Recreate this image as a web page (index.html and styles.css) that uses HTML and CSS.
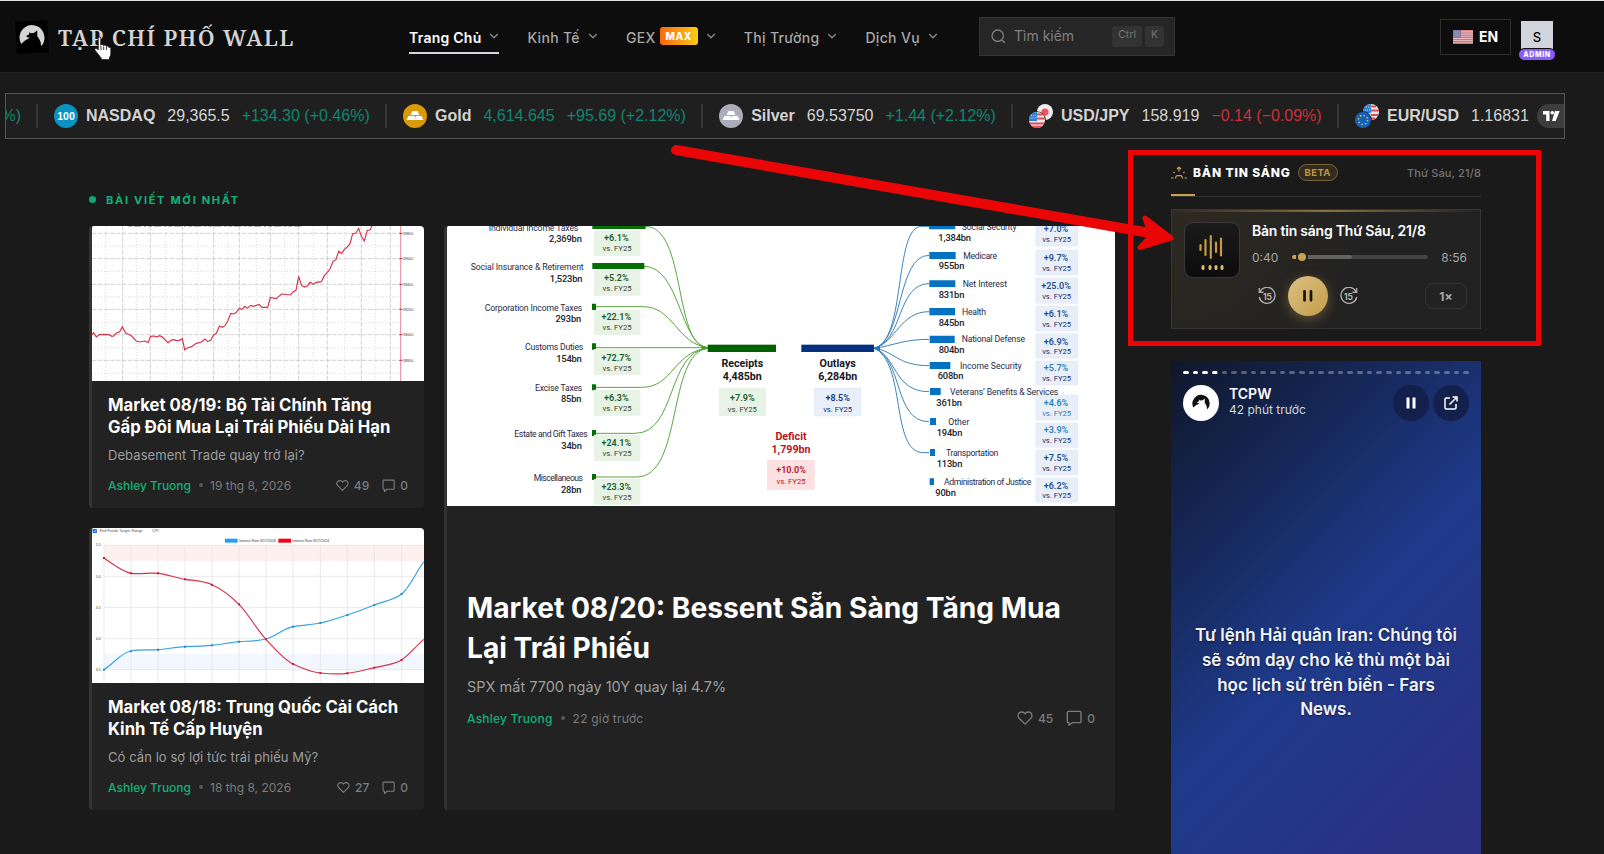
FILE: index.html
```html
<!DOCTYPE html>
<html lang="vi">

<head>
    <meta charset="UTF-8">
    <meta name="viewport" content="width=device-width, initial-scale=1.0">
    <title>Tạp Chí Phố Wall</title>
    <link rel="stylesheet" href="styles.css">
</head>

<body>
    <svg class="defs" width="0" height="0">
        <symbol id="chevron" viewBox="0 0 10 6"><path d="M1.2 1l3.8 3.8L8.8 1" fill="none" stroke="currentColor" stroke-width="1.3"/></symbol>
        <symbol id="heart" viewBox="0 0 24 24"><path d="M20.8 4.6a5.5 5.5 0 0 0-7.8 0L12 5.7l-1-1.1a5.5 5.5 0 0 0-7.8 7.8L12 21.2l8.800-8.800a5.500 5.500 0 0 0 0-7.800z" fill="none" stroke="currentColor" stroke-width="2" stroke-linejoin="round"/></symbol>
        <symbol id="comment" viewBox="0 0 24 24"><path d="M4 2h17a1.500 1.500 0 0 1 1.500 1.500v14A1.500 1.500 0 0 1 21 19H9.500L4.500 23v-4H3.500A1.500 1.500 0 0 1 2 17.500v-14A1.500 1.500 0 0 1 3.500 2z" fill="none" stroke="currentColor" stroke-width="2" stroke-linejoin="round"/></symbol>
        <symbol id="wolf" viewBox="0 0 26 26"><path d="M2 19.500A12.500 12.500 0 1 1 21.500 22.800C22 18.500 20.500 15.500 18.300 12.500L18.600 6.500 15.500 9l-3.500.3L10.500 8l-.3 2.300-2.700 1.200.5 1.500 3 .7C8 15 4.500 16.500 2 19.500z" fill="currentColor"/></symbol>
        <symbol id="bars" viewBox="0 0 24 24"><path d="M9.500 7h5l2 4h-9zM5.500 12h6l1.500 4H3.500zM13 12h5.500l2 4h-9z" fill="#fff"/></symbol>
    </svg>

    <header class="header">
        <a class="logo">
            <span class="logo-mark"><svg width="26" height="26"><use href="#wolf"/></svg></span>
            <span class="logo-text">TẠP CHÍ PHỐ WALL</span>
        </a>
        <nav class="nav">
            <a class="active">Trang Chủ <svg class="chev"><use href="#chevron"/></svg></a>
            <a>Kinh Tế <svg class="chev"><use href="#chevron"/></svg></a>
            <a class="gex">GEX <b class="max">MAX</b><svg class="chev"><use href="#chevron"/></svg></a>
            <a>Thị Trường <svg class="chev"><use href="#chevron"/></svg></a>
            <a>Dịch Vụ <svg class="chev"><use href="#chevron"/></svg></a>
        </nav>
        <div class="search">
            <svg width="15" height="15" viewBox="0 0 15 15"><path d="M10.800 10.800L14 14M6.700 12.400a5.700 5.700 0 1 0 0-11.400 5.700 5.700 0 0 0 0 11.400z" fill="none" stroke="currentColor" stroke-width="1.300"/></svg>
            <span class="search-label">Tìm kiếm</span>
            <kbd>Ctrl</kbd><kbd>K</kbd>
        </div>
        <div class="lang">
            <svg width="20" height="14" viewBox="0 0 20 14"><rect width="20" height="14" rx="1" fill="#e9b9be"/><path d="M0 .7h20M0 3h20M0 5.200h20M0 7.400h20M0 9.500h20M0 11.600h20M0 13.500h20" stroke="#d8717d" stroke-width="1.100"/><rect width="8" height="8" fill="#7c79a8"/><path d="M1.500 2h5M1.500 4h5M1.500 6h5" stroke="#c9c8de" stroke-width=".8" stroke-dasharray="1 1"/></svg>
            EN
        </div>
        <div class="avatar">S<span class="admin">ADMIN</span></div>
        <svg class="cursor" width="18" height="25" viewBox="0 0 18 25"><path d="M4.200 2.200c0-1.600 2.600-1.600 2.600 0v7c.6-1.200 2.600-1 2.800.4.800-1 2.600-.6 2.700.8 1-.8 2.500-.2 2.600 1.200.8-.6 2 0 2 1.200v4.500c0 2-.8 3-1.400 4.400v2H7.200v-1.500C6 20.500 3.500 17.500 1 14.200c-.9-1.300.6-2.700 1.900-1.600l1.300 1.200z" fill="#fff" stroke="#111" stroke-width=".9"/><path d="M7 10v4M9.700 10.500V14M12.400 11v3" stroke="#222" stroke-width=".9"/></svg>
    </header>

    <div class="ticker">
        <div class="quote first"><span class="up">%)</span></div>
        <div class="quote">
            <svg class="sym" viewBox="0 0 24 24"><circle cx="12" cy="12" r="12" fill="#0a93c0"/><text x="12" y="15.500" class="hundred">100</text></svg>
            <b>NASDAQ</b><span>29,365.5</span><span class="up">+134.30 (+0.46%)</span>
        </div>
        <div class="quote">
            <svg class="sym" viewBox="0 0 24 24"><circle cx="12" cy="12" r="12" fill="#d99a08"/><use href="#bars"/></svg>
            <b>Gold</b><span class="up">4,614.645</span><span class="up">+95.69 (+2.12%)</span>
        </div>
        <div class="quote">
            <svg class="sym" viewBox="0 0 24 24"><circle cx="12" cy="12" r="12" fill="#adacba"/><use href="#bars"/></svg>
            <b>Silver</b><span>69.53750</span><span class="up">+1.44 (+2.12%)</span>
        </div>
        <div class="quote">
            <svg class="sym" viewBox="0 0 24 24">
                <circle cx="16" cy="8" r="8" fill="#f0edf0"/><circle cx="16" cy="8" r="3.600" fill="#ef5360"/>
                <circle cx="8" cy="16" r="8.800" fill="#202020"/><circle cx="8" cy="16" r="8" fill="#e9e9ee"/>
                <path d="M8 10.500h5.500M8 14.500h8M1 19.500h14" stroke="#e34b50" stroke-width="2.200"/><path d="M2.500 21.800h11a8 8 0 0 1-11 0z" fill="#e34b50"/><path d="M8 8v9H0a8 8 0 0 1 8-9z" fill="#2f7fd6"/><path d="M2 11.500h6M1.500 14h6.500" stroke="#b4d3f4" stroke-dasharray="1 1"/>
            </svg>
            <b>USD/JPY</b><span>158.919</span><span class="down">−0.14 (−0.09%)</span>
        </div>
        <div class="quote last">
            <svg class="sym" viewBox="0 0 24 24">
                <circle cx="16" cy="8" r="8" fill="#e9e9ee"/><path d="M16 2.500h5M16 6.500h8M16 11h7M13 14.500h7" stroke="#e34b50" stroke-width="2"/><path d="M16 0v9H8a8 8 0 0 1 8-9z" fill="#2f7fd6"/><path d="M11 3h5M10 6h6" stroke="#b4d3f4" stroke-dasharray="1 1"/>
                <circle cx="8" cy="16" r="8.800" fill="#202020"/><circle cx="8" cy="16" r="8" fill="#1660bd"/><circle cx="8" cy="16" r="4.600" fill="none" stroke="#e0cb45" stroke-width="1.500" stroke-dasharray="1.400 2.210"/>
            </svg>
            <b>EUR/USD</b><span>1.16831</span>
        </div>
        <div class="tv"><svg width="17" height="10" viewBox="0 0 17 10"><path d="M0 0h6.500v10H3.200V3.500H0zM12 0h4.700l-4 10H9z" fill="#fff"/><circle cx="9.300" cy="1.800" r="1.800" fill="#fff"/></svg></div>
    </div>

    <main class="page">
        <section class="news">
            <h2 class="section-title">BÀI VIẾT MỚI NHẤT</h2>
            <div class="news-grid">
                <div class="small-cards">
                    <article class="card">
                        <svg class="thumb" viewBox="36 138 996 465" preserveAspectRatio="none">
                            <rect x="36" y="138" width="996" height="465" fill="#fff"/>
                            <path class="grid-dash" d="M36 160H962M36 236H962M36 313H962M36 388H962M36 464H962M36 541H962M128 138V603M211 138V603M307 138V603M401 138V603M478 138V603M571 138V603M656 138V603M742 138V603M844 138V603M931 138V603"/>
                            <path class="grid-dot" d="M36 198H962M36 274H962M36 350H962M36 427H962M36 503H962M36 580H962M77 138V603M169 138V603M257 138V603M354 138V603M444 138V603M529 138V603M614 138V603M700 138V603M793 138V603M887 138V603"/>
                            <path d="M145 139H663" stroke="#aaa" stroke-width="3" stroke-dasharray="12 5 22 8 7 6"/>
                            <path d="M962 138V603" stroke="#e58a95" stroke-width="3"/>
                            <path d="M958 160h10M958 236h10M958 313h10M958 388h10M958 464h10M958 541h10" stroke="#c22f45" stroke-width="3"/>
                            <polyline class="line-red" points="36,464 41,458 49,471 58,464 72,463 86,464 96,469 101,468 109,459 119,455 127,440 137,459 145,463 154,467 163,477 170,484 178,486 196,483 204,488 212,469 222,468 229,471 239,467 247,471 264,488 273,481 281,479 290,482 298,481 307,476 314,509 323,503 335,500 349,490 364,486 375,477 383,485 392,481 401,464 409,460 418,438 427,442 435,437 443,424 452,400 461,402 469,397 478,385 486,388 494,379 502,385 512,376 520,379 538,373 546,382 563,382 571,352 588,356 605,342 631,345 640,335 648,331 656,289 665,317 674,321 683,317 690,307 700,313 708,307 724,305 733,287 742,277 750,267 759,244 768,239 776,214 785,221 793,208 801,202 810,191 818,161 828,159 836,145 844,169 853,183 862,151 870,150 876,138"/>
                            <g class="axis"><text x="969" y="165">39800</text><text x="969" y="241">39600</text><text x="969" y="318">39400</text><text x="969" y="393">39200</text><text x="969" y="469">39000</text><text x="969" y="546">38800</text></g>
                        </svg>
                        <div class="card-body">
                            <h3>Market 08/19: Bộ Tài Chính Tăng<br>Gấp Đôi Mua Lại Trái Phiếu Dài Hạn</h3>
                            <p>Debasement Trade quay trở lại?</p>
                            <div class="meta">
                                <span class="author">Ashley Truong</span><i></i><span>19 thg 8, 2026</span>
                                <span class="stat first-stat"><svg><use href="#heart"/></svg>49</span>
                                <span class="stat"><svg><use href="#comment"/></svg>0</span>
                            </div>
                        </div>
                    </article>
                    <article class="card">
                        <svg class="thumb" viewBox="36 39 996 465" preserveAspectRatio="none">
                            <rect x="36" y="39" width="996" height="465" fill="#fff"/>
                            <rect x="72" y="91" width="960" height="47" fill="#fff0f0"/>
                            <rect x="72" y="417" width="960" height="48" fill="#f1f7fd"/>
                            <path d="M72 91H1032M72 184H1032M72 277H1032M72 371H1032M72 464H1032M72 91V504M153 91V504M234 91V504M315 91V504M396 91V504M477 91V504M558 91V504M639 91V504M721 91V504M802 91V504M883 91V504M965 91V504" stroke="#e4e4e4" stroke-width="2.500"/>
                            <rect x="38" y="42" width="13" height="12" rx="2" fill="#1668e3"/><path d="M41 48l3 3 5-6" fill="none" stroke="#fff" stroke-width="2"/>
                            <rect x="435" y="71" width="38" height="12" fill="#229ff0"/><rect x="595" y="71" width="38" height="12" fill="#f4001c"/>
                            <g class="axis"><text x="59" y="52" textLength="129">Fed Funds Target Range</text><text x="217" y="52">CPI</text><text x="477" y="80" textLength="111">Interest Rate 8/17/2026</text><text x="636" y="80" textLength="111">Interest Rate 8/17/2024</text><text x="47" y="94">5.5</text><text x="47" y="188">5.0</text><text x="47" y="281">4.5</text><text x="47" y="374">4.0</text><text x="47" y="467">3.5</text></g>
                            <path class="line-blue" d="M72 464C105 442 125 412 153 408 180 403 207 406 234 404S288 396 315 395 369 393 396 391 450 382 477 380 531 379 558 372 612 340 639 335 693 330 721 324 775 309 802 300 856 281 883 270 940 256 965 237C991 215 1012 164 1032 140"/>
                            <path class="line-red" d="M72 129C100 148 126 169 153 175 180 178 207 173 234 175S288 189 315 193 369 197 396 209 450 241 477 268 531 344 558 373 612 434 639 447 693 471 721 474 775 478 802 475 856 464 883 458 942 449 965 435C990 416 1011 390 1032 373"/>
                            <path class="dots-blue" d="M72 464h0M153 409h0M234 404h0M315 395h0M396 391h0M477 380h0M639 335h0M721 324h0M802 300h0M883 270h0M965 237h0"/>
                            <path class="dots-red" d="M72 129h0M153 175h0M234 175h0M315 193h0M396 209h0M477 268h0M558 373h0M639 447h0M721 474h0M802 475h0M883 458h0M965 435h0"/>
                        </svg>
                        <div class="card-body">
                            <h3>Market 08/18: Trung Quốc Cải Cách<br>Kinh Tế Cấp Huyện</h3>
                            <p>Có cần lo sợ lợi tức trái phiếu Mỹ?</p>
                            <div class="meta">
                                <span class="author">Ashley Truong</span><i></i><span>18 thg 8, 2026</span>
                                <span class="stat first-stat"><svg><use href="#heart"/></svg>27</span>
                                <span class="stat"><svg><use href="#comment"/></svg>0</span>
                            </div>
                        </div>
                    </article>
                </div>

                <article class="card featured">
                    <svg class="hero" viewBox="21 33 2004 840" preserveAspectRatio="none">
                        <rect x="21" y="33" width="2004" height="840" fill="#fff"/>
                        <!-- receipts -->
                        <g class="flow-green">
                            <path d="M616 34C740 34 700 395 803 398"/><path d="M612 154C720 154 720 390 803 398"/><path d="M467 275H610C700 275 710 385 803 398"/><path d="M467 398H803"/><path d="M467 517H605C700 517 700 410 803 400"/><path d="M467 655H585C710 655 680 410 803 400"/><path d="M467 786H590C730 786 680 415 803 400"/>
                        </g>
                        <path d="M785 390l18 8-18 8z" fill="#47a51d"/>
                        <path d="M457 33h160v9H457zM457 144h156v18H457zM456 266h12v19h-12zM456 385h12v19h-12zM456 508h12v18h-12zM456 645h12v18h-12zM456 777h12v18h-12z" fill="#047004"/>
                        <rect x="803" y="389" width="205" height="22" fill="#006100"/>
                        <path d="M462 48h139v75H462zM462 164h139v78H462zM462 285h139v75H462zM462 402h139v78H462zM462 524h139v78H462zM462 659h139v79H462zM462 792h139v77H462zM837 519h141v84H837z" fill="#e7f3e5"/>
                        <g class="name">
                            <text x="146" y="47" textLength="269">Individual Income Taxes</text><text x="92" y="165" textLength="339">Social Insurance &amp; Retirement</text><text x="134" y="287" textLength="293">Corporation Income Taxes</text><text x="255" y="404" textLength="175">Customs Duties</text><text x="285" y="527" textLength="142">Excise Taxes</text><text x="223" y="666" textLength="220">Estate and Gift Taxes</text><text x="281" y="797" textLength="148">Miscellaneous</text>
                        </g>
                        <g class="amount end"><text x="425" y="81">2,369bn</text><text x="427" y="200">1,523bn</text><text x="423" y="321">293bn</text><text x="425" y="440">154bn</text><text x="424" y="561">85bn</text><text x="425" y="702">34bn</text><text x="424" y="833">28bn</text></g>
                        <g class="pct green"><text x="529" y="79">+6.1%</text><text x="529" y="199">+5.2%</text><text x="529" y="316">+22.1%</text><text x="529" y="439">+72.7%</text><text x="529" y="559">+6.3%</text><text x="529" y="694">+24.1%</text><text x="529" y="826">+23.3%</text><text x="907" y="559">+7.9%</text></g>
                        <g class="vs"><text x="531" y="108">vs. FY25</text><text x="531" y="228">vs. FY25</text><text x="531" y="346">vs. FY25</text><text x="531" y="468">vs. FY25</text><text x="531" y="588">vs. FY25</text><text x="531" y="723">vs. FY25</text><text x="531" y="856">vs. FY25</text><text x="907" y="590">vs. FY25</text></g>
                        <g class="total"><text x="907" y="455">Receipts</text><text x="907" y="495">4,485bn</text><text x="1193" y="455">Outlays</text><text x="1193" y="495">6,284bn</text></g>
                        <!-- deficit -->
                        <rect x="981" y="735" width="143" height="90" fill="#fde0e2"/>
                        <g class="total red"><text x="1053" y="676">Deficit</text><text x="1053" y="715">1,799bn</text></g>
                        <text class="pct red" x="1053" y="775">+10.0%</text><text class="vs red" x="1053" y="808">vs. FY25</text>
                        <!-- outlays -->
                        <g transform="translate(1020 0)">
                            <g class="flow-blue">
                                <path d="M282 400C380 380 340 34 425 34H447"/><path d="M282 400C370 380 350 121 447 121"/><path d="M282 400C370 380 350 206 447 206"/><path d="M282 400C350 380 360 290 447 290"/><path d="M282 400C340 392 370 373 447 373"/><path d="M282 400C340 405 350 452 447 452"/><path d="M282 400C350 420 340 530 447 530"/><path d="M282 400C370 430 340 620 447 620"/><path d="M282 400C380 440 330 713 430 713H447"/>
                            </g>
                            <path d="M282 400l18-9v18z" fill="#167cc9"/>
                            <rect x="64" y="389" width="218" height="22" fill="#05307f"/>
                            <path d="M447 33h79v10h-79zM448 111h79v21h-79zM448 196h78v20h-78zM448 279h77v22h-77zM449 362h75v22h-75zM449 441h62v21h-62zM450 519h32v21h-32zM450 609h18v21h-18zM450 702h15v21h-15zM449 790h13v20h-13z" fill="#0472c2"/>
                            <path d="M767 30h127v64H767zM767 105h127v75H767zM767 189h127v76H767zM767 273h127v75H767zM767 356h127v74H767zM767 438h127v72H767zM767 539h127v76H767zM767 624h127v73H767zM767 705h127v75H767zM767 789h127v73H767zM103 519h140v84H103z" fill="#e9eff8" stroke="#dbe5f2"/>
                            <g class="name">
                                <text x="545" y="44" textLength="165">Social Security</text><text x="550" y="131" textLength="101">Medicare</text><text x="548" y="215" textLength="133">Net Interest</text><text x="546" y="300" textLength="72">Health</text><text x="545" y="381" textLength="190">National Defense</text><text x="540" y="462" textLength="185">Income Security</text><text x="510" y="539" textLength="325">Veterans’ Benefits &amp; Services</text><text x="505" y="630" textLength="63">Other</text><text x="498" y="722" textLength="157">Transportation</text><text x="492" y="811" textLength="262">Administration of Justice</text>
                            </g>
                            <g class="amount"><text x="475" y="77">1,384bn</text><text x="476" y="163">955bn</text><text x="476" y="248">831bn</text><text x="476" y="332">845bn</text><text x="476" y="413">804bn</text><text x="473" y="493">608bn</text><text x="469" y="572">361bn</text><text x="470" y="663">194bn</text><text x="470" y="755">113bn</text><text x="466" y="843">90bn</text></g>
                            <g class="pct blue"><text x="828" y="52">+7.0%</text><text x="828" y="138">+9.7%</text><text x="828" y="223">+25.0%</text><text x="828" y="307">+6.1%</text><text x="828" y="389">+6.9%</text><text class="sky" x="828" y="469">+5.7%</text><text class="sky" x="828" y="574">+4.6%</text><text class="sky" x="828" y="655">+3.9%</text><text x="828" y="738">+7.5%</text><text x="828" y="821">+6.2%</text><text class="navy" x="173" y="559">+8.5%</text></g>
                            <g class="vs navy"><text x="830" y="81">vs. FY25</text><text x="830" y="167">vs. FY25</text><text x="830" y="252">vs. FY25</text><text x="830" y="336">vs. FY25</text><text x="830" y="418">vs. FY25</text><text x="830" y="498">vs. FY25</text><text class="sky" x="830" y="603">vs. FY25</text><text x="830" y="685">vs. FY25</text><text x="830" y="768">vs. FY25</text><text x="830" y="850">vs. FY25</text><text x="173" y="590">vs. FY25</text></g>
                        </g>
                    </svg>
                    <div class="card-body">
                        <h3>Market 08/20: Bessent Sẵn Sàng Tăng Mua<br>Lại Trái Phiếu</h3>
                        <p>SPX mất 7700 ngày 10Y quay lại 4.7%</p>
                        <div class="meta">
                            <span class="author">Ashley Truong</span><i></i><span>22 giờ trước</span>
                            <span class="stat first-stat"><svg><use href="#heart"/></svg>45</span>
                            <span class="stat"><svg><use href="#comment"/></svg>0</span>
                        </div>
                    </div>
                </article>
            </div>
        </section>

        <aside class="sidebar">
            <div class="brief-head">
                <svg width="16" height="14" viewBox="0 0 16 14"><path d="M0 12h2.500M13.500 12H16M2.500 6l1.200 1.200M13.500 6l-1.200 1.200M8 1.200v4.300M6 3l2-2 2 2M4.500 12.500c0-1.200.5-2.200 1.500-2.900l4 0c1 .7 1.500 1.700 1.500 2.900" fill="none" stroke="#c9a24e" stroke-width="1.200"/></svg>
                <span class="brief-title">BẢN TIN SÁNG</span>
                <span class="beta">BETA</span>
                <span class="brief-date">Thứ Sáu, 21/8</span>
            </div>
            <div class="player">
                <div class="cover">
                    <svg width="54" height="54" viewBox="0 0 54 54"><path d="M15.500 22v5M20.500 17v15M25.800 13v22M31 19.500v9.500M36 15.500v17" stroke="#c39b4a" stroke-width="2.200" stroke-linecap="round"/><path d="M18 43.500v2M25 43.500v2M31 43.500v2M37 43.500v2" stroke="#e0bd74" stroke-width="3" stroke-linecap="round"/></svg>
                </div>
                <div class="player-main">
                    <div class="player-title">Bản tin sáng Thứ Sáu, 21/8</div>
                    <div class="progress">
                        <span>0:40</span>
                        <div class="track"><div class="buffered"></div><div class="knob"></div></div>
                        <span>8:56</span>
                    </div>
                    <div class="controls">
                        <svg width="18" height="18" viewBox="0 0 18 18"><path d="M2 4.500A8 8 0 1 1 1.200 10M1.300 1v4.200h4.200" fill="none" stroke="#aaa" stroke-width="1.400"/><text x="9.500" y="12.800" class="skip">15</text></svg>
                        <button class="play"><svg width="10" height="12" viewBox="0 0 10 12"><path d="M1.500 1.300v9M8 1.300v9" stroke="#1a1407" stroke-width="2.700" stroke-linecap="round"/></svg></button>
                        <svg width="18" height="18" viewBox="0 0 18 18"><path d="M16 4.500A8 8 0 1 0 16.800 10M16.700 1v4.200h-4.200" fill="none" stroke="#aaa" stroke-width="1.400"/><text x="8.500" y="12.800" class="skip">15</text></svg>
                        <button class="speed">1×</button>
                    </div>
                </div>
            </div>

            <div class="story">
                <div class="segments">
                    <i class="on"></i><i class="on"></i><i class="on"></i><i class="part"></i><i></i><i></i><i></i><i></i><i></i><i></i>
                    <i></i><i></i><i></i><i></i><i></i><i></i><i></i><i></i><i></i><i></i>
                    <i></i><i></i><i></i><i></i><i></i><i></i><i></i><i></i><i></i><i></i>
                </div>
                <div class="story-head">
                    <span class="story-avatar"><svg width="18" height="18"><use href="#wolf"/></svg></span>
                    <div class="story-name"><b>TCPW</b><span>42 phút trước</span></div>
                    <button><svg width="10" height="12" viewBox="0 0 10 12"><path d="M2 .5v11M8 .5v11" stroke="#fff" stroke-width="3"/></svg></button>
                    <button><svg width="14" height="14" viewBox="0 0 14 14"><path d="M6 2H2.200Q1 2 1 3.200v8.600Q1 13 2.200 13h8.600q1.200 0 1.200-1.200V8M8.500 1H13v4.500M13 1L5.500 8.500" fill="none" stroke="#fff" stroke-width="1.500"/></svg></button>
                </div>
                <p class="story-text">Tư lệnh Hải quân Iran: Chúng tôi<br>sẽ sớm dạy cho kẻ thù một bài<br>học lịch sử trên biển - Fars<br>News.</p>
            </div>
        </aside>
    </main>

    <svg class="annotation" width="1604" height="854" viewBox="0 0 1604 854">
        <rect x="1130.500" y="152.500" width="408" height="191" fill="none" stroke="#ea0606" stroke-width="5"/>
        <path d="M676 150L1150 233" stroke="#ea0606" stroke-width="10" stroke-linecap="round"/>
        <path d="M1145 218L1171 238 1140 247.500 1151 236z" fill="#ea0606" stroke="#ea0606" stroke-width="5" stroke-linejoin="round"/>
    </svg>
</body>

</html>
```

FILE: styles.css
```css
* {
    box-sizing: border-box;
}

body {
    margin: 0;
    height: 854px;
    overflow: hidden;
    position: relative;
    background-color: #1a1a1a;
    color: #fff;
    font-family: Inter, "Liberation Sans", sans-serif;
}

button {
    border: none;
    padding: 0;
    font-family: inherit;
    color: inherit;
}

svg {
    display: block;
    flex: none;
}

.defs {
    position: absolute;
}

/* header */
.header {
    position: relative;
    display: flex;
    align-items: center;
    height: 73px;
    padding: 0 51px 0 16px;
    background-color: #0d0d0d;
    border-top: 1px solid #dfe3e1;
    border-bottom: 1px solid #202020;
}

.logo {
    display: flex;
    align-items: center;
    gap: 10px;
    width: 393px;
}

.logo-mark {
    display: flex;
    align-items: center;
    justify-content: center;
    width: 32px;
    height: 32px;
    background-color: #000;
    color: #d4d4d4;
    transform: rotate(-3deg);
}

.logo-text {
    font-family: "Noto Serif", "Liberation Serif", serif;
    font-size: 22px;
    font-weight: 600;
    line-height: 32px;
    letter-spacing: 1.35px;
    color: #d4d4d4;
    white-space: nowrap;
}

.nav {
    display: flex;
    align-items: center;
    gap: 28px;
    width: 570px;
    font-size: 14px;
    font-weight: 500;
    color: #a8a8a8;
    white-space: nowrap;
}

.nav a {
    display: flex;
    align-items: center;
    gap: 8px;
    height: 34px;
    padding-top: 3px;
    border-bottom: 2px solid transparent;
    letter-spacing: 0.32px;
}

.nav .active {
    color: #fff;
    font-weight: 600;
    letter-spacing: 0.25px;
    border-color: #d5d7e0;
}

.chev {
    width: 10px;
    height: 6px;
    margin-top: -2px;
    color: #8a8a8a;
}

.nav .gex {
    gap: 4px;
}

.max {
    padding: 0 6px;
    margin: -3px 4px 0 0;
    border-radius: 3px;
    background: linear-gradient(90deg, #f9690e, #fccb15);
    color: #fff;
    font-size: 10px;
    font-weight: 800;
    line-height: 18px;
    letter-spacing: 0.5px;
}

.search {
    display: flex;
    align-items: center;
    gap: 3px;
    width: 196px;
    height: 39px;
    padding: 0 10px 0 11px;
    background-color: #262626;
    border: 1px solid #333;
    color: #808080;
    font-size: 14px;
}

.search-label {
    flex: 1;
    margin: -2px 0 0 5px;
}

kbd {
    height: 21px;
    padding: 0 6px;
    border-radius: 3px;
    background-color: #333;
    color: #747474;
    font: 10.5px/18px Inter, sans-serif;
}

.lang {
    display: flex;
    align-items: center;
    gap: 6px;
    width: 71px;
    height: 36px;
    margin-left: auto;
    padding-left: 12px;
    border: 1px solid #2e2e2e;
    font-size: 14px;
    font-weight: 700;
}

.avatar {
    position: relative;
    width: 32px;
    height: 32px;
    margin-left: 10px;
    background-color: #d1d5db;
    color: #000;
    font-size: 13px;
    font-weight: 500;
    line-height: 33px;
    text-align: center;
}

.admin {
    position: absolute;
    left: -2px;
    top: 28px;
    width: 36px;
    border-radius: 6px;
    background-color: #8b5cf6;
    box-shadow: 0 0 0 1px #0d0d0d;
    color: #fff;
    font-size: 7px;
    font-weight: 800;
    line-height: 11px;
    letter-spacing: 0.6px;
}

.cursor {
    position: absolute;
    left: 94px;
    top: 35px;
}

/* ticker */
.ticker {
    display: flex;
    align-items: center;
    width: 1560px;
    height: 46px;
    margin: 20px 0 0 5px;
    background-color: #1f1f1f;
    border: 1px solid #565656;
    font-family: "Liberation Sans", Arial, sans-serif;
    font-size: 16px;
    color: #d3d3d3;
    white-space: nowrap;
    overflow: hidden;
}

.quote {
    display: flex;
    align-items: center;
    flex: none;
    gap: 12px;
    height: 24px;
    padding: 0 15.300px 0 16px;
    border-right: 2px solid #363636;
}

.quote.first {
    justify-content: flex-end;
    width: 32px;
    padding: 0 15px 0 0;
}

.quote.last {
    border: none;
    padding-right: 8px;
}

.sym {
    width: 24px;
    height: 24px;
    margin-right: -4px;
}

.hundred {
    fill: #fff;
    font: bold 10.5px "Liberation Sans", sans-serif;
    text-anchor: middle;
}

.up {
    color: #118670;
}

.down {
    color: #cb303c;
}

.tv {
    display: flex;
    align-items: center;
    flex: none;
    width: 34px;
    height: 24px;
    padding-left: 6px;
    border-radius: 12px 0 0 12px;
    background-color: #3d3d3d;
}

/* page */
.page {
    display: flex;
    gap: 56px;
    padding: 0 0 0 89px;
}

.news {
    width: 1026px;
    padding-top: 52px;
}

.section-title {
    display: flex;
    align-items: center;
    gap: 10px;
    height: 17px;
    margin: 0 0 18px;
    color: #16b079;
    font-size: 11px;
    font-weight: 700;
    letter-spacing: 1.7px;
}

.section-title::before {
    content: "";
    width: 7px;
    height: 7px;
    border-radius: 50%;
    background-color: #12a873;
}

.news-grid {
    display: flex;
    gap: 20px;
}

.small-cards {
    display: grid;
    gap: 20px;
    width: 335px;
}

.card {
    height: 282px;
    border-left: 3px solid #333;
    border-radius: 4px;
    background-color: #222;
    overflow: hidden;
}

.thumb {
    width: 332px;
    height: 155px;
}

.hero {
    width: 668px;
    height: 280px;
}

.card-body {
    padding: 13px 16px 0;
}

.card h3 {
    margin: 0;
    font-size: 16.7px;
    font-weight: 700;
    line-height: 22px;
    white-space: nowrap;
}

.card p {
    margin: 7px 0 0;
    font-size: 13px;
    line-height: 20px;
    letter-spacing: 0.07px;
    color: #9e9e9e;
}

.meta {
    display: flex;
    align-items: center;
    height: 18px;
    margin-top: 11px;
    color: #7c7c7c;
    font-size: 12px;
}

.meta i {
    width: 4px;
    height: 4px;
    margin: 0 7px 0 8px;
    border-radius: 50%;
    background-color: #595959;
}

.author {
    color: #16b079;
    font-weight: 500;
}

.stat {
    display: flex;
    align-items: center;
    gap: 5px;
    margin-left: 13px;
    font-weight: 500;
}

.first-stat {
    margin-left: auto;
}

.stat svg {
    width: 13px;
    height: 13px;
}

.featured {
    width: 671px;
    height: 584px;
}

.featured .card-body {
    padding: 82px 20px 0;
}

.featured h3 {
    font-size: 28.15px;
    line-height: 40px;
}

.featured p {
    margin-top: 9px;
    font-size: 14.5px;
    letter-spacing: 0;
}

.featured .meta {
    margin-top: 12px;
    letter-spacing: 0.2px;
}

.featured .meta i {
    margin: 0 8px;
}

.featured .stat {
    letter-spacing: 0;
}

.featured .stat svg {
    width: 16px;
    height: 16px;
}

/* chart drawings */
.axis {
    fill: #444;
    font: 11px "Liberation Sans", sans-serif;
}

.grid-dash {
    stroke: #c9c9c9;
    stroke-width: 2.5;
    stroke-dasharray: 14 4;
}

.grid-dot {
    stroke: #d3d3d3;
    stroke-width: 2.5;
    stroke-dasharray: 3 6;
}

.line-red,
.line-blue {
    fill: none;
    stroke: #d8334a;
    stroke-width: 3.5;
}

.line-blue {
    stroke: #35a1e4;
}

.dots-red,
.dots-blue {
    stroke: #c81d30;
    stroke-width: 6;
    stroke-linecap: square;
}

.dots-blue {
    stroke: #1c8cd4;
}

.flow-green {
    fill: none;
    stroke: #5aa640;
    stroke-width: 3;
}

.flow-blue {
    fill: none;
    stroke: #3d84bd;
    stroke-width: 3;
}

.name,
.amount,
.pct,
.vs,
.total {
    font-family: Roboto, Inter, sans-serif;
}

.name {
    fill: #262a4a;
    font-size: 26px;
}

.amount {
    fill: #22222c;
    font-size: 28px;
    font-weight: 500;
    letter-spacing: -0.5px;
}

.end {
    text-anchor: end;
}

.pct,
.vs,
.total {
    text-anchor: middle;
}

.pct {
    font-size: 27px;
    font-weight: 600;
}

.vs {
    fill: #34453a;
    font-size: 23px;
}

.total {
    fill: #16161c;
    font-size: 32px;
    font-weight: 700;
}

.green {
    fill: #175c2b;
}

.blue {
    fill: #1d4f96;
}

.navy {
    fill: #23306b;
}

.sky {
    fill: #2d82ba;
}

.red {
    fill: #b3151e;
}

/* sidebar */
.sidebar {
    width: 310px;
    padding-top: 22px;
}

.brief-head {
    display: flex;
    align-items: center;
    height: 36px;
    padding-bottom: 12px;
    border-bottom: 1px solid #333;
    background: linear-gradient(#c9a24e, #c9a24e) 0 100% / 24px 2px no-repeat;
}

.brief-title {
    margin-left: 6px;
    font-size: 12px;
    font-weight: 800;
    letter-spacing: 0.85px;
    white-space: nowrap;
}

.beta {
    width: 40px;
    margin-left: 7px;
    border: 1px solid #7a6334;
    border-radius: 9px;
    background-color: #332c1d;
    color: #bd9648;
    font-size: 9.5px;
    font-weight: 700;
    line-height: 15px;
    letter-spacing: 0.4px;
    text-align: center;
}

.brief-date {
    margin-left: auto;
    color: #757575;
    font-size: 11px;
    font-weight: 500;
    letter-spacing: 0.15px;
}

.player {
    position: relative;
    display: flex;
    gap: 12px;
    height: 120px;
    margin-top: 12px;
    padding: 12px 13px 0 12px;
    border: 1px solid #353535;
    background: radial-gradient(circle at 0 0, #2e2a21, #222 60%);
}

.player::before {
    content: "";
    position: absolute;
    left: 0;
    right: 0;
    top: 0;
    height: 2px;
    background: linear-gradient(90deg, transparent, #8b7140 50%, transparent);
}

.cover {
    width: 56px;
    height: 56px;
    border: 1px solid #383838;
    border-radius: 9px;
    background: linear-gradient(#1b1b1b, #0c0c0c);
}

.player-main {
    flex: 1;
}

.player-title {
    font-size: 14px;
    font-weight: 600;
    line-height: 18px;
    letter-spacing: -0.22px;
}

.progress {
    display: flex;
    align-items: center;
    justify-content: space-between;
    height: 18px;
    margin-top: 8px;
    color: #a6a6a6;
    font-size: 12px;
}

.track {
    position: relative;
    width: 136px;
    height: 4px;
    border-radius: 2px;
    background-color: #434343;
}

.buffered {
    width: 60px;
    height: 4px;
    border-radius: 2px;
    background: linear-gradient(90deg, #c9a24e 4px, #626262 4px);
}

.knob {
    position: absolute;
    left: 4px;
    top: -4px;
    width: 8px;
    height: 8px;
    border: 2px solid #222;
    border-radius: 50%;
    box-sizing: content-box;
}

.knob::after {
    content: "";
    display: block;
    width: 8px;
    height: 8px;
    border-radius: 50%;
    background-color: #c9a24e;
}

.controls {
    display: flex;
    align-items: center;
    gap: 12px;
    height: 40px;
    margin-top: 10px;
    padding-left: 6px;
}

.skip {
    fill: #b5b5b5;
    font: bold 8.5px Inter, sans-serif;
    text-anchor: middle;
}

.play {
    display: flex;
    align-items: center;
    justify-content: center;
    width: 40px;
    height: 40px;
    border-radius: 50%;
    background: linear-gradient(135deg, #dcc182, #c39c4b);
    box-shadow: 0 3px 12px rgba(201, 162, 78, 0.4);
}

.speed {
    width: 42px;
    height: 26px;
    margin-left: auto;
    border: 1px solid #343434;
    border-radius: 8px;
    background-color: #222;
    color: #a8a8a8;
    font-size: 12px;
    font-weight: 700;
}

.story {
    height: 551px;
    margin-top: 32px;
    padding: 10px 12px;
    background: linear-gradient(135deg, #0f172a, #1e3a8a 50%, #312e81);
}

.segments {
    display: flex;
    gap: 4px;
}

.segments i {
    flex: 1;
    height: 3px;
    border-radius: 2px;
    background-color: rgba(255, 255, 255, 0.3);
}

.segments .on {
    background-color: #fff;
}

.segments .part {
    background: linear-gradient(90deg, #fff 75%, #6a7287 75%);
}

.story-head {
    display: flex;
    align-items: center;
    gap: 4px;
    margin-top: 11px;
}

.story-avatar,
.story-head button {
    display: flex;
    align-items: center;
    justify-content: center;
    width: 36px;
    height: 36px;
    border-radius: 50%;
    background-color: #fff;
    color: #111;
}

.story-head button {
    background-color: #14204c;
}

.story-name {
    display: flex;
    flex-direction: column;
    flex: 1;
    margin: -3px 0 0 6px;
    font-size: 12px;
    line-height: 16px;
    color: #d0d4dd;
}

.story-name b {
    font-size: 14px;
    font-weight: 600;
    line-height: 17px;
    color: #fff;
}

.story-text {
    margin: 202px 0 0;
    color: #f4f5f8;
    font-size: 17px;
    font-weight: 600;
    line-height: 24.75px;
    text-align: center;
    white-space: nowrap;
    text-shadow: 0 1px 2px rgba(0, 0, 0, 0.5);
}

/* drawn over the page */
.annotation {
    position: absolute;
    left: 0;
    top: 0;
}
```
